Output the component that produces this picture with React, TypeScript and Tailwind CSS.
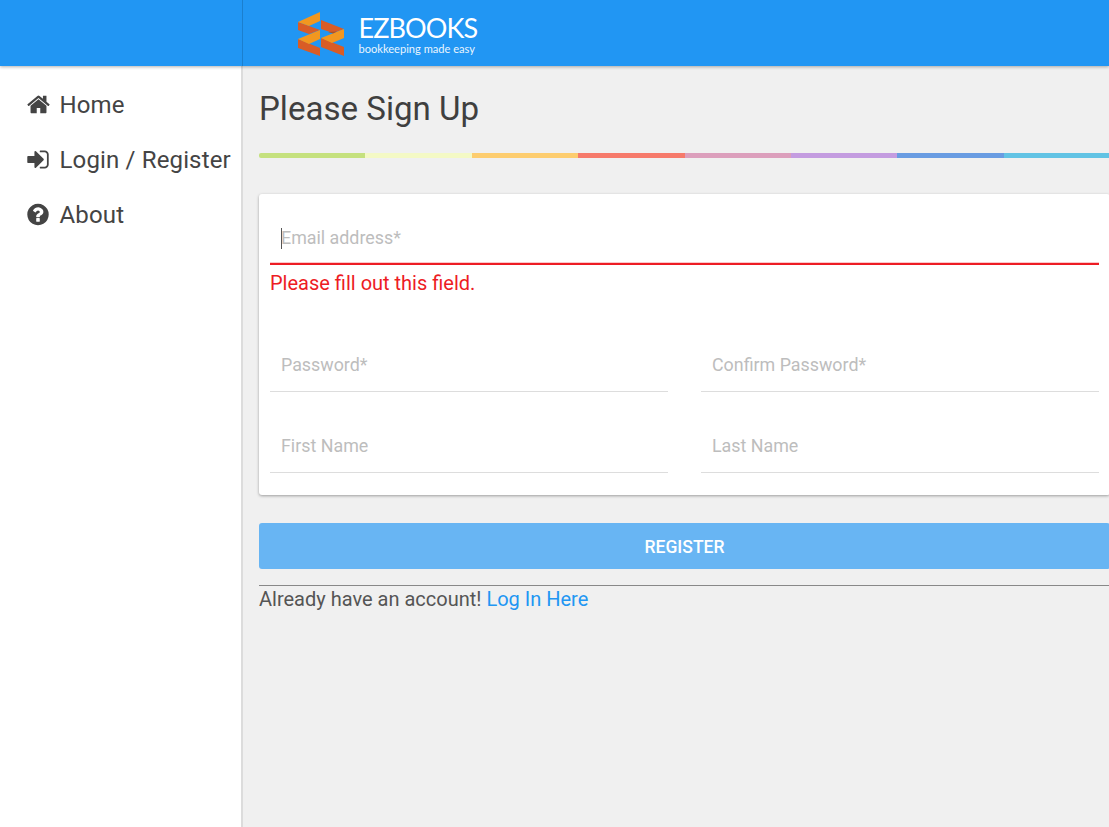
const font = "[font-family:Roboto,sans-serif]";

function IconHome() {
  return (
    <svg viewBox="0 0 1664 1792" className="w-[23px] h-[25px] fill-[#444]">
      <path d="M1408 992v480q0 26-19 45t-45 19h-384v-384h-256v384h-384q-26 0-45-19t-19-45v-480q0-1 .5-3t.5-3l575-474 575 474q1 2 1 6zm223-69l-62 74q-8 9-21 11h-3q-13 0-21-7l-692-577-692 577q-12 8-24 7-13-2-21-11l-62-74q-8-10-7-23.5t11-21.5l719-599q32-26 76-26t76 26l244 204v-195q0-14 9-23t23-9h192q14 0 23 9t9 23v408l219 182q10 8 11 21.5t-7 23.5z" />
    </svg>
  );
}
function IconSignIn() {
  return (
    <svg viewBox="0 0 1536 1792" className="w-[22px] h-[25px] fill-[#444]">
      <path d="M1184 896q0 26-19 45l-544 544q-19 19-45 19t-45-19-19-45v-288h-448q-26 0-45-19t-19-45v-384q0-26 19-45t45-19h448v-288q0-26 19-45t45-19 45 19l544 544q19 19 19 45zm352-352v704q0 119-84.5 203.5t-203.5 84.5h-320q-13 0-22.5-9.5t-9.5-22.5q0-4-1-20t-.5-26.5 3-23.5 10-19.5 20.5-6.5h320q66 0 113-47t47-113v-704q0-66-47-113t-113-47h-312l-11.5-1-11.5-3-8-5.5-7-9-2-13.5q0-4-1-20t-.5-26.5 3-23.5 10-19.5 20.5-6.5h320q119 0 203.5 84.5t84.5 203.5z" />
    </svg>
  );
}
function IconHelp() {
  return (
    <svg viewBox="0 0 1536 1792" className="w-[22px] h-[25px] fill-[#444]">
      <path d="M896 1376v-192q0-14-9-23t-23-9h-192q-14 0-23 9t-9 23v192q0 14 9 23t23 9h192q14 0 23-9t9-23zm256-672q0-88-55.5-163t-138.5-116-170-41q-243 0-371 213-15 24 8 42l132 100q7 6 19 6 16 0 25-12 53-68 86-92 34-24 86-24 48 0 85.5 26t37.5 59q0 38-20 61t-68 45q-63 28-115.5 86.5t-52.5 125.5v36q0 14 9 23t23 9h192q14 0 23-9t9-23q0-19 21.5-49.5t54.5-49.5q32-18 49-28.5t46-35 44.5-48 28-60.5 12.5-81zm384 192q0 209-103 385.5t-279.5 279.5-385.5 103-385.5-103-279.5-279.5-103-385.5 103-385.5 279.5-279.5 385.5-103 385.5 103 279.5 279.5 103 385.5z" />
    </svg>
  );
}

function Logo() {
  return (
    <svg viewBox="0 0 50 46" className="w-[50px] h-[46px] shrink-0">
      <polygon points="2,11 24,19 13,23 2,19" fill="#d95c26" />
      <polygon points="2,28 24,37 24,45 2,37" fill="#d95c26" />
      <polygon points="25,9 48,18 37,22 25,18" fill="#d95c26" />
      <polygon points="25,27 48,36 48,45 25,36" fill="#d95c26" />
      <polygon points="24,1 24,10 13,15 2,11" fill="#f2971f" />
      <polygon points="24,19 24,28 13,33 2,28" fill="#f2971f" />
      <polygon points="48,18 48,27 36,32 25,27" fill="#f2971f" />
      <polygon points="32,21 41,20.5 37,22.5" fill="#a8502a" />
    </svg>
  );
}

function Field({ label }: { label: string }) {
  return (
    <div className="flex-1 h-[49px] border-b border-[#ddd] flex items-center px-[11px] pb-[3px] text-[17.85px] text-[#bdbdbd]">
      {label}
    </div>
  );
}

function NavItem({ icon, label }: { icon: React.ReactNode; label: string }) {
  return (
    <div className="h-[55px] flex items-center pl-[27px] text-[#444] text-[24px] tracking-[0.15px]">
      <span className="w-[32.5px] flex -mt-[1px]">{icon}</span>
      <span>{label}</span>
    </div>
  );
}

const colors = ["bg-[#c5e17e]", "bg-[#f4f9c5]", "bg-[#fdcd6f]", "bg-[#f67a6b]", "bg-[#dc9fbc]", "bg-[#c49ce0]", "bg-[#699ce2]", "bg-[#62c3e4]"];

export default function App() {
  return (
    <div className={`${font} w-[1109px] h-[827px] overflow-hidden flex flex-col bg-[#f0f0f0]`}>
      <header className="h-[66px] shrink-0 bg-[#2196f3] flex shadow-[0_1px_3px_rgba(0,0,0,0.3)] relative z-10">
        <div className="w-[243px] shrink-0 border-r border-[#1b7fce]" />
        <div className="flex items-center pl-[53px] pt-[2px] gap-[12.5px]">
          <Logo />
          <div className="flex flex-col text-white [font-family:Lato,sans-serif]">
            <span className="text-[27px] leading-[27px] tracking-[-0.9px]">EZBOOKS</span>
            <span className="text-[11.1px] leading-[13px] mt-[1px] opacity-90">bookkeeping made easy</span>
          </div>
        </div>
      </header>
      <div className="flex flex-1 min-h-0">
        <nav className="w-[243px] shrink-0 bg-white border-r-2 border-[#dcdcdc] pt-[11px]">
          <NavItem icon={<IconHome />} label="Home" />
          <NavItem icon={<IconSignIn />} label="Login / Register" />
          <NavItem icon={<IconHelp />} label="About" />
        </nav>
        <main className="w-[883px] shrink-0 px-[16px]">
          <h1 className="text-[33.1px] font-normal text-[#3f3f3f] leading-[40px] mt-[23px]">Please Sign Up</h1>
          <div className="flex h-[5px] mt-[24px] rounded-l-[2px] overflow-hidden">
            {colors.map((c) => (
              <div key={c} className={`flex-1 ${c}`} />
            ))}
          </div>
          <section className="mt-[36px] bg-white rounded-[3px] shadow-[0_1px_3px_rgba(0,0,0,0.35)] px-[11px] h-[301px] pt-[20px]">
            <div className="h-[51px] border-b-2 border-[#ed1c24] flex items-center px-[11px] text-[17.85px] text-[#bdbdbd] relative">
              <span className="absolute left-[11px] top-[14px] w-px h-[21px] bg-[#555]" />
              <span className="absolute left-0 right-0 bottom-0 h-px bg-[#fbc8cb]" />
              Email address*
            </div>
            <div className="text-[20px] text-[#ed1c24] leading-[24px] mt-[6px] h-[72px]">Please fill out this field.</div>
            <div className="flex gap-[33px]">
              <Field label="Password*" />
              <Field label="Confirm Password*" />
            </div>
            <div className="flex gap-[33px] mt-[32px]">
              <Field label="First Name" />
              <Field label="Last Name" />
            </div>
          </section>
          <button className="mt-[28px] w-full h-[46px] pt-[2px] rounded-[3px] bg-[#68b5f3] text-white text-[17.5px] font-medium block">REGISTER</button>
          <div className="mt-[16px] border-t border-[#888] text-[20px] leading-[27px] text-[#555]">
            Already have an account! <a className="text-[#2196f3]">Log In Here</a>
          </div>
        </main>
      </div>
    </div>
  );
}
